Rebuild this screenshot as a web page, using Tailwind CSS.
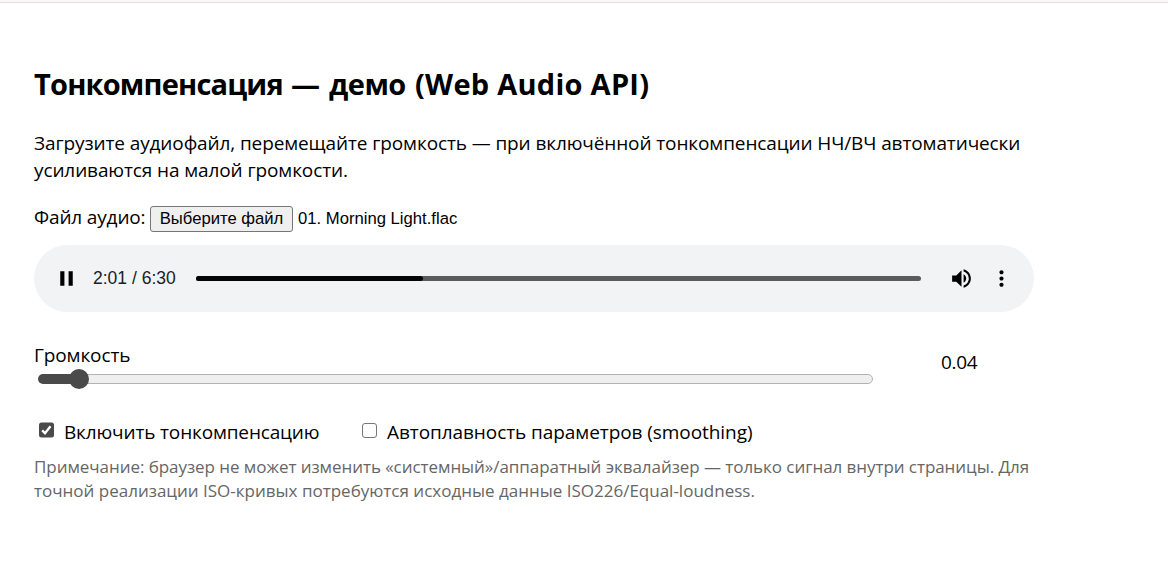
<!DOCTYPE html>
<html lang="ru">
<head>
    <meta charset="UTF-8">
    <meta name="viewport" content="width=device-width, initial-scale=1.0">
    <title>Тонкомпенсация — демо (Web Audio API)</title>
    <script src="https://cdn.jsdelivr.net/npm/@tailwindcss/browser@4"></script>
</head>
<body class="bg-white text-black h-[575px] overflow-hidden font-['Open_Sans','Noto_Sans',sans-serif]">
    <div class="h-[3px] bg-[#fbf7f9] border-b border-[#dfdfe1]"></div>

    <main class="w-[1000px] ml-[34px] pt-[60px] whitespace-nowrap">
        <h1 class="h-[42px] leading-[42px] text-[29px] font-bold flex">
            <span class="w-[257px] tracking-[-0.8px]">Тонкомпенсация</span>
            <span class="w-[38px]">—</span>
            <span class="w-[86px] tracking-[-0.5px]">демо</span>
            <span class="tracking-[0.27px]">(Web Audio API)</span>
        </h1>

        <p class="mt-[25px] leading-[27px] text-[19px] tracking-[-0.11px]">
            <span>Загрузите аудиофайл, перемещайте громкость — при включённой тонкомпенсации НЧ/ВЧ автоматически</span><br>
            <span>усиливаются на малой громкости.</span>
        </p>

        <!-- File input -->
        <div class="mt-[19px] h-[30px] flex items-center text-[19px]">
            <span class="w-[116px] -mt-[2px] tracking-[-0.15px]">Файл аудио:</span>
            <button class="w-[143px] h-[26px] mt-[2px] border border-[#767676] rounded-[3px] bg-[#efefef] text-[16.67px] leading-[24px] font-['Liberation_Sans',sans-serif]">Выберите файл</button>
            <span class="ml-[5px] text-[16.67px] font-['Liberation_Sans',sans-serif]">01. Morning Light.flac</span>
        </div>

        <!-- Player -->
        <div class="mt-[12px] h-[67px] rounded-full bg-[#f1f3f4] flex items-center font-['Liberation_Sans',sans-serif]">
            <svg class="ml-[20px] w-[25px] h-[25px]" viewBox="0 0 24 24"><path d="M6 19h4V5H6v14zm8-14v14h4V5h-4z"/></svg>
            <span class="ml-[14px] w-[103px] text-[17.5px] text-[#202124]">2:01 / 6:30</span>
            <div class="w-[725px] h-[5px] rounded-full bg-[#5a5b5b]">
                <div class="w-[227px] h-full rounded-full bg-[#050505]"></div>
            </div>
            <svg class="ml-[28px] w-[25px] h-[25px]" viewBox="0 0 24 24"><path d="M3 9v6h4l5 5V4L7 9H3zm13.5 3c0-1.77-1.02-3.29-2.5-4.03v8.05c1.48-.73 2.5-2.25 2.5-4.02zM14 3.23v2.06c2.89.86 5 3.54 5 6.71s-2.11 5.85-5 6.71v2.06c4.01-.91 7-4.49 7-8.77s-2.99-7.86-7-8.77z"/></svg>
            <svg class="ml-[15px] w-[25px] h-[25px]" viewBox="0 0 24 24"><path d="M12 8c1.1 0 2-.9 2-2s-.9-2-2-2-2 .9-2 2 .9 2 2 2zm0 2c-1.1 0-2 .9-2 2s.9 2 2 2 2-.9 2-2-.9-2-2-2zm0 6c-1.1 0-2 .9-2 2s.9 2 2 2 2-.9 2-2-.9-2-2-2z"/></svg>
        </div>

        <!-- Volume -->
        <div class="mt-[30px] flex text-[19px] leading-[27px]">
            <div class="w-[907px]">
                <div class="tracking-[-0.12px]">Громкость</div>
                <div class="h-[20px] ml-[4px] flex items-center">
                    <div class="w-[40px] h-[10px] rounded-l-full bg-[#4a4a4a]"></div>
                    <div class="z-10 -mx-[9px] w-[20px] h-[20px] rounded-full bg-[#4a4a4a]"></div>
                    <div class="w-[793px] h-[10px] rounded-r-full border border-[#b2b2b2] bg-[#efefef]"></div>
                </div>
            </div>
            <span class="mt-[7px] tracking-[-0.3px]">0.04</span>
        </div>

        <!-- Options -->
        <div class="mt-[29px] h-[28px] flex items-center text-[19px]">
            <svg class="ml-[4px] mb-[4px] w-[17px] h-[16px]" viewBox="0 0 17 16"><rect x="1" y="0.5" width="15" height="15" rx="2.5" fill="#4a4a4a"/><path d="M4.2 8.4 7 11.2 12.5 4.2" fill="none" stroke="#fff" stroke-width="2.3"/></svg>
            <span class="ml-[9px] w-[298px] tracking-[-0.15px]">Включить тонкомпенсацию</span>
            <div class="mb-[4px] w-[15px] h-[15px] rounded-[3px] border border-[#767676]"></div>
            <span class="ml-[10px] tracking-[-0.07px]">Автоплавность параметров (smoothing)</span>
        </div>

        <p class="mt-[9px] leading-[24px] text-[17px] text-[#666]">
            <span class="tracking-[-0.055px]">Примечание: браузер не может изменить «системный»/аппаратный эквалайзер — только сигнал внутри страницы. Для</span><br>
            <span>точной реализации ISO-кривых потребуются исходные данные ISO226/Equal-loudness.</span>
        </p>
    </main>
</body>
</html>
